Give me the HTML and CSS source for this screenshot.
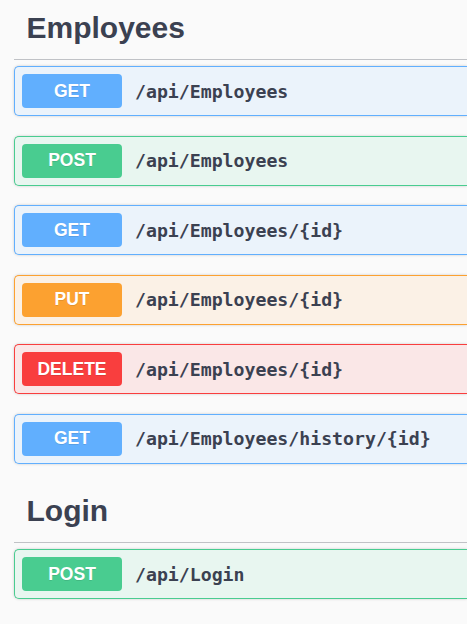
FILE: index.html
```html
<!DOCTYPE html>
<html>
<head>
<meta charset="utf-8">
<link rel="stylesheet" href="styles.css">
</head>
<body>
<div class="page">
  <section class="tag-section">
    <h3 class="tag">Employees</h3>
    <div class="ops">
      <div class="op op-get"><span class="method">GET</span><span class="path">/api/Employees</span></div>
      <div class="op op-post"><span class="method">POST</span><span class="path">/api/Employees</span></div>
      <div class="op op-get"><span class="method">GET</span><span class="path">/api/Employees/{id}</span></div>
      <div class="op op-put"><span class="method">PUT</span><span class="path">/api/Employees/{id}</span></div>
      <div class="op op-delete"><span class="method">DELETE</span><span class="path">/api/Employees/{id}</span></div>
      <div class="op op-get"><span class="method">GET</span><span class="path">/api/Employees/history/{id}</span></div>
    </div>
  </section>
  <section class="tag-section">
    <h3 class="tag">Login</h3>
    <div class="ops">
      <div class="op op-post"><span class="method">POST</span><span class="path">/api/Login</span></div>
    </div>
  </section>
</div>
</body>
</html>
```
FILE: styles.css
```css
html, body {
  margin: 0;
  padding: 0;
  background: #fafafa;
  overflow: hidden;
}
.page {
  box-sizing: border-box;
  padding-left: 14px;
  width: 467px;
  font-family: "Liberation Sans", Arial, sans-serif;
  color: #3b4151;
}
.tag-section {
  margin-bottom: 5px;
}
.tag {
  margin: 0;
  padding: 12.5px 25px 16.5px 12.5px;
  font-size: 30px;
  line-height: 30px;
  font-weight: 700;
  color: #3b4151;
  border-bottom: 1px solid rgba(59, 65, 81, 0.3);
}
.ops {
  padding-top: 6px;
}
.op {
  display: flex;
  align-items: center;
  padding: 7px;
  margin-bottom: 19.5px;
  border: 1px solid #61affe;
  border-right-width: 0;
  border-radius: 5px 0 0 5px;
  box-shadow: 0 0 3px rgba(0, 0, 0, 0.19);
}
.method {
  flex: none;
  width: 100px;
  height: 34px;
  display: flex;
  align-items: center;
  justify-content: center;
  border-radius: 4px;
  color: #fff;
  font-size: 17.5px;
  font-weight: 700;
  text-shadow: 0 1px 0 rgba(0, 0, 0, 0.1);
}
.path {
  padding-left: 13px;
  font-family: "DejaVu Sans Mono", "Liberation Mono", monospace;
  font-weight: 700;
  font-size: 18.2px;
  color: #3b4151;
  white-space: nowrap;
}
.op-get { background: #ebf3fb; border-color: #61affe; }
.op-get .method { background: #61affe; }
.op-post { background: #e8f6f0; border-color: #49cc90; }
.op-post .method { background: #49cc90; }
.op-put { background: #fbf1e6; border-color: #fca130; }
.op-put .method { background: #fca130; }
.op-delete { background: #fae7e7; border-color: #f93e3e; }
.op-delete .method { background: #f93e3e; }
```
